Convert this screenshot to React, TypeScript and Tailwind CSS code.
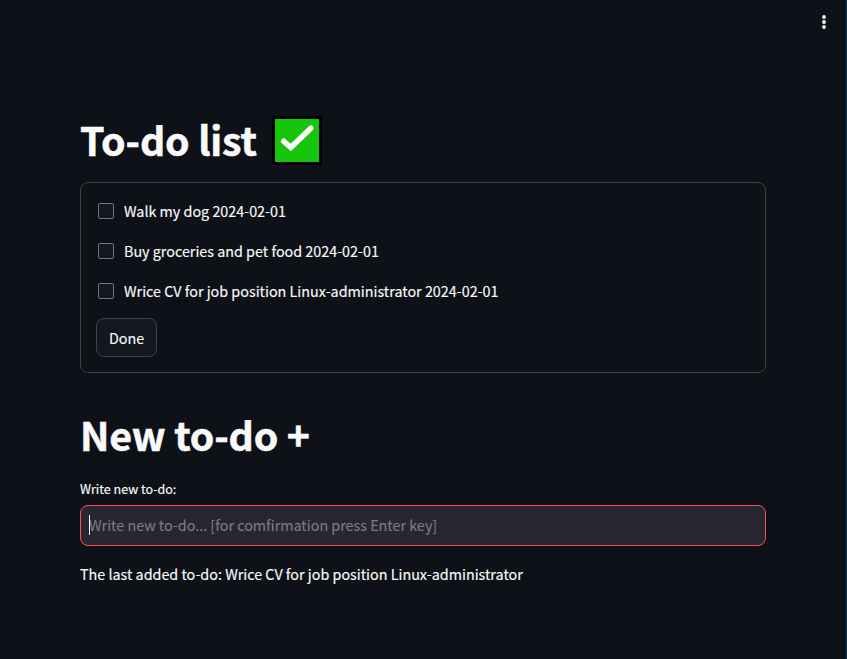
const items = [
  'Walk my dog 2024-02-01',
  'Buy groceries and pet food 2024-02-01',
  'Wrice CV for job position Linux-administrator 2024-02-01',
];

function Task({ label }: { label: string }) {
  return (
    <label className="flex h-6 items-center gap-2.5 pl-0.5">
      <span className="size-4 shrink-0 rounded-[2px] border border-[#72747a] bg-[#13171f]" />
      <span className="whitespace-nowrap text-[14.33px] leading-6">{label}</span>
    </label>
  );
}

export default function App() {
  return (
    <div className="h-[659px] overflow-hidden border-r border-[#12365a] bg-[#0e1117] font-['Noto_Sans_CJK_SC','Noto_Sans',sans-serif] text-[#fafafa] [-webkit-text-stroke:0.15px]">
      <header className="flex h-11 items-center justify-end pr-[14px]">
        <svg width="16" height="16" viewBox="0 0 16 16" fill="#fafafa" aria-label="Menu">
          <circle cx="8" cy="3" r="1.9" />
          <circle cx="8" cy="8" r="1.9" />
          <circle cx="8" cy="13" r="1.9" />
        </svg>
      </header>
      <main className="ml-20 w-[686px] pt-[70px]">
        <h1 className="flex h-[53px] items-center gap-[15px] whitespace-nowrap text-[39.3px] font-bold leading-[53px] tracking-[-0.2px] [-webkit-text-stroke:0.5px]">
          <span className="pb-1">To-do list</span>
          <svg width="50" height="49" viewBox="0 0 50 49" aria-label="Done">
            <rect width="50" height="49" fill="#000" />
            <rect x="3" y="3" width="44" height="43" fill="#16c60c" />
            <path d="M11.7 25.2 18.8 31.5 38.8 12.2" fill="none" stroke="#fff" strokeWidth="5.4" strokeLinecap="round" />
          </svg>
        </h1>
        <section className="mt-[15px] h-[191px] rounded-lg border border-[#3e4045] px-[15px] pt-4">
          <div className="flex flex-col gap-4">
            {items.map((item) => (
              <Task key={item} label={item} />
            ))}
          </div>
          <button className="mt-[15px] flex h-[39px] w-[61px] items-center justify-center rounded-lg border border-[#41444c] bg-[#131720] text-[14.33px]">
            Done
          </button>
        </section>
        <h1 className="mt-[34px] h-[53px] whitespace-nowrap text-[39.3px] font-bold leading-[53px] tracking-[-0.2px] [-webkit-text-stroke:0.5px]">New to-do +</h1>
        <p className="mt-[19px] h-5 text-[12.5px] leading-5">Write new to-do:</p>
        <div className="relative mt-1.5 flex h-[41px] items-center rounded-lg border border-[#ff4b4b] bg-[#262730] px-2 pb-0.5">
          <input
            className="w-full bg-transparent text-[14.33px] leading-6 outline-none placeholder:text-[#7b7c82]"
            placeholder="Write new to-do... [for comfirmation press Enter key]"
          />
          <span className="absolute left-2 top-[9px] h-5 w-px bg-[#fafafa]" />
        </div>
        <p className="mt-4 whitespace-nowrap text-[14.33px] leading-6">
          The last added to-do: Wrice CV for job position Linux-administrator
        </p>
      </main>
    </div>
  );
}
